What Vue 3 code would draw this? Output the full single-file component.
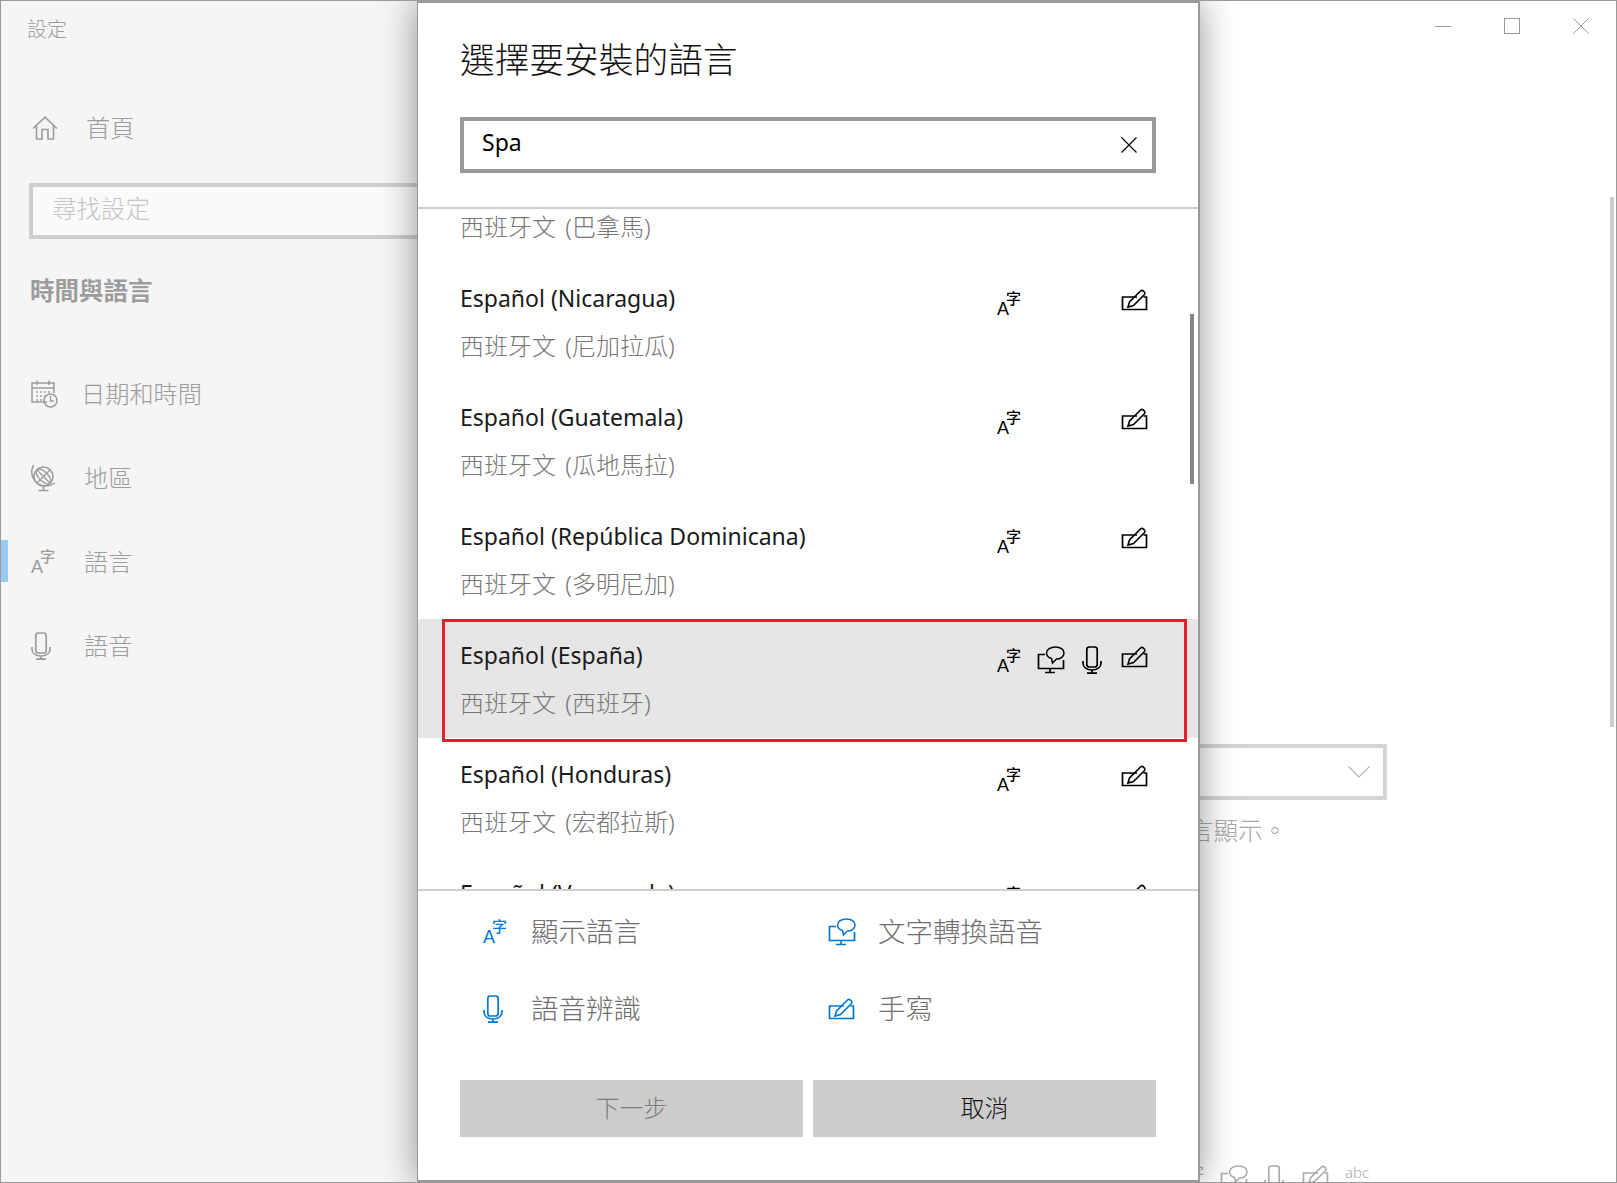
<script setup>
const nav = [
  { icon: 'calendar', label: '日期和時間', tight: true },
  { icon: 'globe', label: '地區' },
  { icon: 'lang', label: '語言', active: true },
  { icon: 'mic', label: '語音' },
]
const rows = [
  { name: 'Español (Panamá)', sub: '西班牙文 (巴拿馬)', caps: ['lang', '', '', 'pen'] },
  { name: 'Español (Nicaragua)', sub: '西班牙文 (尼加拉瓜)', caps: ['lang', '', '', 'pen'] },
  { name: 'Español (Guatemala)', sub: '西班牙文 (瓜地馬拉)', caps: ['lang', '', '', 'pen'] },
  { name: 'Español (República Dominicana)', sub: '西班牙文 (多明尼加)', caps: ['lang', '', '', 'pen'] },
  { name: 'Español (España)', sub: '西班牙文 (西班牙)', caps: ['lang', 'speech', 'mic', 'pen'], selected: true },
  { name: 'Español (Honduras)', sub: '西班牙文 (宏都拉斯)', caps: ['lang', '', '', 'pen'] },
  { name: 'Español (Venezuela)', sub: '西班牙文 (委內瑞拉)', caps: ['lang', '', '', 'pen'] },
]
const legend = [
  { icon: 'lang', label: '顯示語言' },
  { icon: 'speech', label: '文字轉換語音' },
  { icon: 'mic', label: '語音辨識' },
  { icon: 'pen', label: '手寫' },
]
const sizes = {
  lang: [24, 26], speech: [28, 28], mic: [20, 28], pen: [27, 22],
  calendar: [27, 28], globe: [25, 28], home: [26, 24],
}
const vb = (n) => `0 0 ${sizes[n][0]} ${sizes[n][1]}`
</script>

<template>
  <div class="window">
    <svg class="defs" width="0" height="0" aria-hidden="true">
      <defs>
        <symbol id="i-pen" viewBox="0 0 27 22">
          <path d="M16 8H1.5V20.5H25.5V8H22.5" fill="none" stroke="currentColor" stroke-width="1.7" />
          <path d="M7 18L8.5 13L19.5 2Q21 .8 22.5 2.2L23.3 3Q24.5 4.5 23.3 5.8L12.5 16.5Z" fill="none" stroke="currentColor" stroke-width="1.6" />
        </symbol>
        <symbol id="i-speech" viewBox="0 0 28 28">
          <path d="M8 8.5H1.5V22.5H26.5V14" fill="none" stroke="currentColor" stroke-width="1.7" />
          <path d="M13 23V26M8 26.5H18" fill="none" stroke="currentColor" stroke-width="1.7" />
          <path d="M14.5 12.5C11 11.5 9.5 9.5 9.5 7C9.5 3.5 13.5 1 18.5 1C23.5 1 27 3.5 27 7C27 10.5 23.5 13 19.5 13L15.5 17Z" fill="none" stroke="currentColor" stroke-width="1.5" />
        </symbol>
        <symbol id="i-mic" viewBox="0 0 20 28">
          <rect x="4.8" y="1" width="10.4" height="20" rx="2.6" fill="none" stroke="currentColor" stroke-width="1.7" />
          <path d="M1 15V17C1 21.5 5 24 10 24C15 24 19 21.5 19 17V15M10 24V27M5 27.2H15" fill="none" stroke="currentColor" stroke-width="1.7" />
        </symbol>
        <symbol id="i-home" viewBox="0 0 26 24">
          <path d="M1 12.5L13 1.2L25 12.5M4.5 9.5V23H10V13.5H16V23H21.5V9.5" fill="none" stroke="currentColor" stroke-width="1.6" />
        </symbol>
        <symbol id="i-calendar" viewBox="0 0 27 28">
          <path d="M16 22H1V3H23V13" fill="none" stroke="currentColor" stroke-width="1.5" />
          <path d="M1 8H23M6 .5V5M18 .5V5" fill="none" stroke="currentColor" stroke-width="1.5" />
          <path d="M5 11h2v2H5zM9 11h2v2H9zM13 11h2v2h-2zM17 11h2v2h-2zM5 15h2v2H5zM9 15h2v2H9zM13 15h2v2h-2zM5 19h2v2H5zM9 19h2v2H9z" fill="currentColor" opacity=".7" />
          <circle cx="19.5" cy="20.5" r="6.5" fill="none" stroke="currentColor" stroke-width="1.5" />
          <path d="M19.5 16V21H23" fill="none" stroke="currentColor" stroke-width="1.3" />
        </symbol>
        <symbol id="i-globe" viewBox="0 0 25 28">
          <circle cx="12.5" cy="12.5" r="9.5" fill="none" stroke="currentColor" stroke-width="1.5" />
          <ellipse cx="12.5" cy="12.5" rx="4.6" ry="9.5" transform="rotate(-45 12.5 12.5)" fill="none" stroke="currentColor" stroke-width="1.3" />
          <path d="M5.8 5.8L19.2 19.2M5.8 19.2L19.2 5.8" fill="none" stroke="currentColor" stroke-width="1.3" />
          <path d="M2.5 1L1 5.5C-.5 13 5 21.5 14 22C18 22 21 21 24 19M12.5 22V26M7.5 26.5H17.5" fill="none" stroke="currentColor" stroke-width="1.5" />
        </symbol>
      </defs>
    </svg>

    <aside class="side">
      <div class="app-title">設定</div>
      <div class="home">
        <svg class="home-icon" width="26" height="24" viewBox="0 0 26 24"><use href="#i-home" /></svg>
        <span class="lift">首頁</span>
      </div>
      <div class="find">尋找設定</div>
      <div class="section">時間與語言</div>
      <nav class="nav">
        <div v-for="n in nav" :key="n.label" class="nav-item" :class="{ active: n.active, tight: n.tight }">
          <span class="nav-icon">
            <svg v-if="n.icon === 'lang'" class="lang-svg" width="24" height="26" viewBox="0 0 24 26">
              <text x="0" y="24" class="lang-a">A</text>
              <text x="9" y="13" class="lang-z">字</text>
            </svg>
            <svg v-else :width="sizes[n.icon][0]" :height="sizes[n.icon][1]" :viewBox="vb(n.icon)"><use :href="'#i-' + n.icon" /></svg>
          </span>
          <span class="lift">{{ n.label }}</span>
        </div>
      </nav>
    </aside>

    <main class="main">
      <div class="controls">
        <svg width="16" height="16" viewBox="0 0 16 16"><path d="M0 8.5H16" stroke="currentColor" /></svg>
        <svg width="16" height="16" viewBox="0 0 16 16"><rect x=".5" y=".5" width="15" height="15" fill="none" stroke="currentColor" /></svg>
        <svg width="16" height="16" viewBox="0 0 16 16"><path d="M.5 .5L15.5 15.5M15.5 .5L.5 15.5" stroke="currentColor" /></svg>
      </div>
      <div class="content">
        <div class="dropdown">
          <svg width="22" height="12" viewBox="0 0 22 12"><path d="M.5 .5L11 11L21.5 .5" fill="none" stroke="currentColor" stroke-width="1.2" /></svg>
        </div>
        <p class="note">Windows 功能將以這個語言顯示。</p>
        <div class="caps">
          <svg class="lang-svg" width="24" height="26" viewBox="0 0 24 26">
            <text x="0" y="24" class="lang-a">A</text>
            <text x="9" y="13" class="lang-z">字</text>
          </svg>
          <svg width="28" height="28" viewBox="0 0 28 28"><use href="#i-speech" /></svg>
          <svg width="20" height="28" viewBox="0 0 20 28"><use href="#i-mic" /></svg>
          <svg class="caps-pen" width="27" height="22" viewBox="0 0 27 22"><use href="#i-pen" /></svg>
          <span class="abc">abc</span>
        </div>
      </div>
      <div class="page-scroll"></div>
    </main>

    <section class="dialog">
      <header class="dlg-head">
        <h1>選擇要安裝的語言</h1>
        <div class="search">
          <span>Spa</span>
          <svg width="16" height="16" viewBox="0 0 16 16"><path d="M.5 .5L15.5 15.5M15.5 .5L.5 15.5" stroke="currentColor" stroke-width="1.2" /></svg>
        </div>
      </header>
      <div class="list">
        <div class="list-inner">
          <div v-for="r in rows" :key="r.name" class="row" :class="{ selected: r.selected }">
            <div class="names">
              <div class="name">{{ r.name }}</div>
              <div class="sub">{{ r.sub }}</div>
            </div>
            <div v-for="(c, i) in r.caps" :key="i" class="cap">
              <svg v-if="c === 'lang'" class="lang-svg" width="24" height="26" viewBox="0 0 24 26">
                <text x="0" y="24" class="lang-a">A</text>
                <text x="9" y="13" class="lang-z">字</text>
              </svg>
              <svg v-else-if="c" :width="sizes[c][0]" :height="sizes[c][1]" :viewBox="vb(c)"><use :href="'#i-' + c" /></svg>
            </div>
            <div v-if="r.selected" class="mark"></div>
          </div>
        </div>
        <div class="thumb"></div>
      </div>
      <footer class="dlg-foot">
        <div class="legend">
          <div v-for="l in legend" :key="l.label" class="leg-item">
            <span class="leg-icon">
              <svg v-if="l.icon === 'lang'" class="lang-svg" width="24" height="26" viewBox="0 0 24 26">
                <text x="0" y="24" class="lang-a">A</text>
                <text x="9" y="13" class="lang-z">字</text>
              </svg>
              <svg v-else :width="sizes[l.icon][0]" :height="sizes[l.icon][1]" :viewBox="vb(l.icon)"><use :href="'#i-' + l.icon" /></svg>
            </span>
            <span class="leg-text">{{ l.label }}</span>
          </div>
        </div>
        <div class="buttons">
          <div class="btn disabled">下一步</div>
          <div class="btn">取消</div>
        </div>
      </footer>
    </section>
  </div>
</template>

<style>
html, body { margin: 0; background: #fff; }
</style>

<style scoped>
.window {
  position: relative;
  box-sizing: border-box;
  width: 1617px;
  height: 1183px;
  display: flex;
  overflow: hidden;
  border: 1px solid #9a9a9a;
  background: #fff;
  font-family: "Noto Sans", "Noto Sans CJK TC", sans-serif;
  font-weight: 300;
}
.defs { position: absolute; }
.lang-svg { overflow: visible; }
.lang-a { font: 400 18px "Liberation Sans", sans-serif; fill: currentColor; }
.lang-z { font: 500 15px "Noto Sans CJK TC", sans-serif; fill: currentColor; }
.lift { padding-bottom: 4px; }

.side {
  width: 416px;
  flex: none;
  background: #f5f5f5;
  color: #9c9c9c;
  font-size: 24.2px;
}
.app-title { height: 58px; line-height: 58px; padding-left: 26px; font-size: 20px; }
.home {
  margin-top: 39px;
  height: 60px;
  padding-left: 31px;
  display: flex;
  align-items: center;
}
.home-icon { margin-right: 28px; }
.find {
  box-sizing: border-box;
  margin: 25px 0 0 28px;
  width: 500px;
  height: 56px;
  border: 4px solid #cecece;
  background: #fafafa;
  color: #c4c4c4;
  font-size: 24.5px;
  line-height: 44px;
  padding-left: 19px;
}
.section {
  margin-top: 33px;
  height: 40px;
  line-height: 38px;
  padding-left: 29px;
  font-size: 24.5px;
  font-weight: 700;
}
.nav { margin-top: 40px; }
.nav-item {
  position: relative;
  height: 84px;
  display: flex;
  align-items: center;
  padding-left: 30px;
}
.nav-icon { width: 53px; display: flex; align-items: center; }
.nav-item.tight .nav-icon { width: 50px; }
.nav-item.active::before {
  content: "";
  position: absolute;
  left: 0;
  top: 20px;
  width: 7px;
  height: 42px;
  background: #99c9f0;
}

.main { position: relative; flex: 1; color: #a8a8a8; }
.controls {
  height: 50px;
  display: flex;
  justify-content: flex-end;
  align-items: center;
  gap: 53px;
  padding-right: 27px;
  color: #999;
}
.content { padding-left: 384px; margin-top: 693px; }
.dropdown {
  box-sizing: border-box;
  width: 586px;
  height: 56px;
  border: 4px solid #d4d4d4;
  display: flex;
  align-items: center;
  justify-content: flex-end;
  padding-right: 13px;
  color: #b4b4b4;
}
.note {
  width: 486px;
  margin: 11px 0 0;
  text-align: right;
  font-size: 24.5px;
  line-height: 40px;
  white-space: nowrap;
}
.caps {
  display: flex;
  align-items: flex-start;
  margin-top: 314px;
  margin-left: 379px;
  gap: 16px;
  color: #ababab;
}
.caps-pen { margin-left: 2px; }
.abc { font-size: 15px; line-height: 20px; margin-top: -3px; }
.page-scroll {
  position: absolute;
  right: 2px;
  top: 196px;
  width: 4px;
  height: 530px;
  background: #cdcdcd;
}

.dialog {
  position: absolute;
  left: 416px;
  top: 0;
  box-sizing: border-box;
  width: 783px;
  height: 1181px;
  border: solid #9a9a9a;
  border-width: 2px 2px 2px 1px;
  background: #fff;
  box-shadow: 0 0 34px rgba(0, 0, 0, .42);
  display: flex;
  flex-direction: column;
  color: #000;
}
.dlg-head {
  height: 206px;
  flex: none;
  box-sizing: border-box;
  padding: 32px 42px 0;
  border-bottom: 2px solid #cfcfcf;
}
h1 {
  margin: 0;
  font-size: 34.7px;
  font-weight: 300;
  line-height: 50px;
  color: #111;
}
.search {
  box-sizing: border-box;
  margin-top: 32px;
  height: 56px;
  border: 4px solid #999;
  display: flex;
  align-items: center;
  justify-content: space-between;
  padding: 0 15px 6px 18px;
  font-size: 23px;
  font-weight: 400;
}
.search svg { margin-top: 6px; }
.list { position: relative; height: 680px; flex: none; overflow: hidden; }
.list-inner { margin-top: -66px; }
.row {
  position: relative;
  box-sizing: border-box;
  height: 119px;
  padding: 14px 37px 0 42px;
  display: grid;
  grid-template-columns: 1fr 40px 45px 39px 40px;
}
.row.selected { background: #e6e6e6; }
.name { font-size: 23px; line-height: 45px; font-weight: 400; color: #1a1a1a; }
.sub { font-size: 24px; line-height: 49px; color: #777; word-spacing: 3px; }
.cap { padding-top: 13px; }
.cap .lang-svg { margin-top: 2px; }
.mark {
  position: absolute;
  left: 24px;
  right: 11px;
  top: 0;
  height: 123px;
  box-sizing: border-box;
  border: 3px solid #ed1c2a;
  z-index: 1;
}
.thumb {
  position: absolute;
  right: 4px;
  top: 105px;
  width: 4px;
  height: 170px;
  background: #858585;
}
.dlg-foot { flex: 1; border-top: 2px solid #cfcfcf; }
.legend {
  padding: 2px 0 0 65px;
  display: grid;
  grid-template-columns: 345px 1fr;
  grid-auto-rows: 77px;
  color: #0078d7;
}
.leg-item { display: flex; align-items: center; font-size: 27.5px; }
.leg-text { color: #707070; padding-bottom: 3px; }
.leg-icon { width: 50px; display: flex; align-items: center; }
.leg-item:nth-child(odd) .leg-icon { width: 48px; }
.buttons {
  margin-top: 33px;
  padding: 0 42px;
  display: flex;
  gap: 10px;
}
.btn {
  flex: 1;
  height: 57px;
  box-sizing: border-box;
  padding-bottom: 4px;
  background: #ccc;
  display: flex;
  align-items: center;
  justify-content: center;
  font-size: 24px;
  color: #111;
}
.btn.disabled { color: #7d7d7d; }
</style>
